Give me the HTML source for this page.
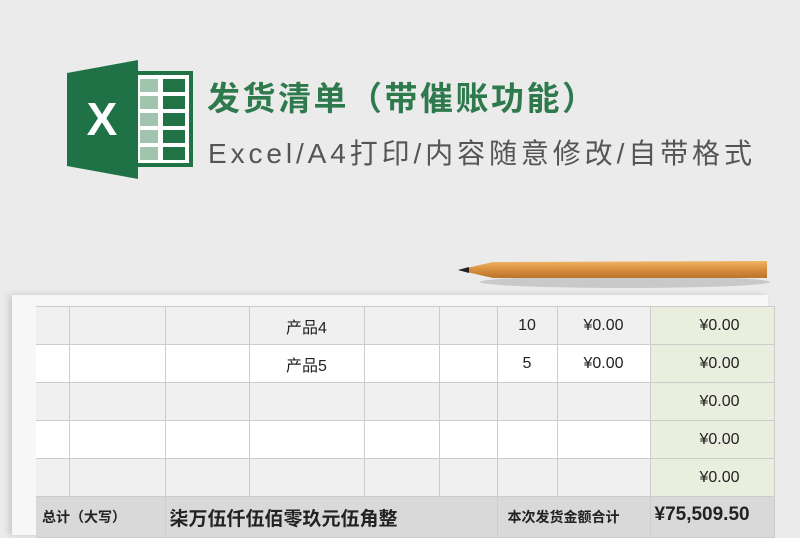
<!DOCTYPE html>
<html><head><meta charset="utf-8"><style>
body{margin:0;width:800px;height:526px;overflow:hidden;background:#ebebeb;font-family:"Liberation Sans","Noto Sans CJK SC",sans-serif;position:relative}
.t1{position:absolute;left:207px;top:72px;font-size:33px;font-weight:bold;color:#2f7a4c;letter-spacing:2.5px;white-space:nowrap}
.t2{position:absolute;left:208px;top:132px;font-size:28px;color:#555;letter-spacing:3.9px;white-space:nowrap}
.paper{position:absolute;left:12px;top:295px;width:756px;height:240px;background:#f7f7f7;box-shadow:-3px 0 6px rgba(0,0,0,.15)}
table{position:absolute;left:36px;top:306px;border-collapse:collapse;font-size:16px;color:#222}
td{border:1px solid #ccc;height:37px;padding:0;text-align:center}
tr td:first-child{border-left:none}
tr.g td{background:#f0f0f0}tr.w td{background:#fff}
td.gr{background:#eaeedf!important;text-align:right;padding-right:34px}
tr.tot td{background:#d9d9d9;font-weight:bold;height:30px;vertical-align:top;padding-top:10px;text-align:left}
</style></head><body>
<svg style="position:absolute;left:60px;top:55px" width="140" height="130">
<rect x="75" y="18" width="56" height="92" fill="#fff" stroke="#217346" stroke-width="4"/>
<g fill="#217346">
<rect x="80" y="24" width="18" height="13" fill="#a0c4ae"/><rect x="103" y="24" width="22" height="13"/>
<rect x="80" y="41" width="18" height="13" fill="#a0c4ae"/><rect x="103" y="41" width="22" height="13"/>
<rect x="80" y="58" width="18" height="13" fill="#a0c4ae"/><rect x="103" y="58" width="22" height="13"/>
<rect x="80" y="75" width="18" height="13" fill="#a0c4ae"/><rect x="103" y="75" width="22" height="13"/>
<rect x="80" y="92" width="18" height="13" fill="#a0c4ae"/><rect x="103" y="92" width="22" height="13"/>
</g>
<path d="M7 18 L78 5 L78 124 L7 111 Z" fill="#1f7246"/>
<text x="42" y="80" font-family="Liberation Sans" font-weight="bold" font-size="46" fill="#fff" text-anchor="middle">X</text>
</svg>
<div class="t1">发货清单（带催账功能）</div>
<div class="t2">Excel/A4打印/内容随意修改/自带格式</div>
<svg style="position:absolute;left:455px;top:256px" width="315" height="36">
<defs><linearGradient id="p" x1="0" y1="0" x2="0" y2="1"><stop offset="0" stop-color="#f0b466"/><stop offset=".5" stop-color="#d88f3e"/><stop offset="1" stop-color="#b8742c"/></linearGradient></defs>
<ellipse cx="170" cy="26" rx="145" ry="6" fill="rgba(0,0,0,.14)"/>
<path d="M3 14 L38 6 L312 5 L312 22 L38 22 Z" fill="url(#p)"/>
<path d="M3 14 L14 11 L14 17 Z" fill="#222"/>
</svg>
<div class="paper"></div>
<table>
<colgroup><col width="33"><col width="96"><col width="84"><col width="115"><col width="75"><col width="58"><col width="60"><col width="93"><col width="124"></colgroup>
<tr class="g"><td></td><td></td><td></td><td>产品4</td><td></td><td></td><td>10</td><td>¥0.00</td><td class="gr">¥0.00</td></tr>
<tr class="w"><td></td><td></td><td></td><td>产品5</td><td></td><td></td><td>5</td><td>¥0.00</td><td class="gr">¥0.00</td></tr>
<tr class="g"><td></td><td></td><td></td><td></td><td></td><td></td><td></td><td></td><td class="gr">¥0.00</td></tr>
<tr class="w"><td></td><td></td><td></td><td></td><td></td><td></td><td></td><td></td><td class="gr">¥0.00</td></tr>
<tr class="g"><td></td><td></td><td></td><td></td><td></td><td></td><td></td><td></td><td class="gr">¥0.00</td></tr>
<tr class="tot"><td colspan="2" style="font-size:14px;padding-left:6px">总计（大写）</td><td colspan="4" style="font-size:19px;padding-left:4px;padding-top:7px">柒万伍仟伍佰零玖元伍角整</td><td colspan="2" style="font-size:14px;padding-left:10px">本次发货金额合计</td><td style="font-size:19px;padding-left:4px;padding-top:7px;background:#d9d9d9">¥75,509.50</td></tr>
</table>
</body></html>
